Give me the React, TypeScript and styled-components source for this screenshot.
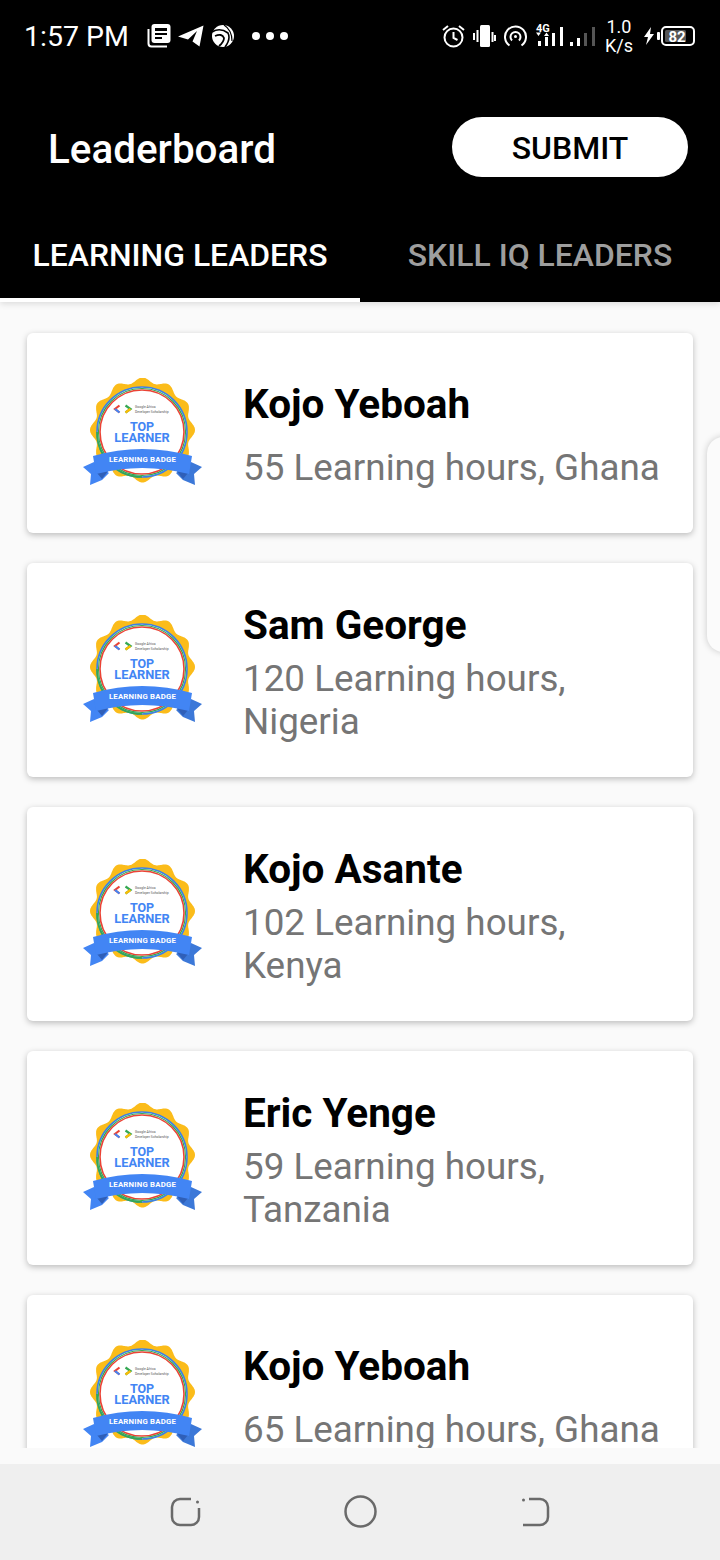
import React, { useState } from "react";
import styled, { createGlobalStyle } from "styled-components";

const GlobalStyle = createGlobalStyle`
  html, body {
    margin: 0;
    padding: 0;
    background: #fafafa;
  }
  * {
    box-sizing: border-box;
  }
`;

const Screen = styled.div`
  position: relative;
  width: 720px;
  height: 1560px;
  display: flex;
  flex-direction: column;
  overflow: hidden;
  background: #fafafa;
  font-family: Roboto, "Liberation Sans", sans-serif;
`;

const Header = styled.header`
  position: relative;
  z-index: 1;
  background: #000;
  color: #fff;
  flex: none;
  box-shadow: 0 2px 6px rgba(0, 0, 0, 0.12);
`;

const StatusBar = styled.div`
  height: 72px;
  display: flex;
  justify-content: space-between;
  align-items: center;
  padding: 0 25px 0 24px;
`;

const StatusGroup = styled.div`
  display: flex;
  align-items: center;
`;

const Clock = styled.span`
  font-size: 28.5px;
  width: 123px;
`;

const Speed = styled.div`
  width: 36px;
  margin-right: 5px;
  font-size: 18px;
  line-height: 19px;
  text-align: center;
`;

const Toolbar = styled.div`
  height: 150px;
  padding: 4px 32px 0 48px;
  display: flex;
  justify-content: space-between;
  align-items: center;
`;

const Title = styled.h1`
  margin: 0;
  font-size: 40.4px;
  font-weight: 500;
`;

const SubmitButton = styled.button`
  width: 236px;
  height: 60px;
  margin-top: -4px;
  padding-top: 2px;
  border: none;
  border-radius: 30px;
  background: #fff;
  color: #000;
  font-family: inherit;
  font-size: 32px;
  font-weight: 500;
`;

const Tabs = styled.div`
  display: flex;
  height: 80px;
`;

const Tab = styled.button<{ $active: boolean }>`
  flex: 1;
  padding: 0 0 10px;
  border: none;
  border-bottom: 4px solid ${(p) => (p.$active ? "#fff" : "transparent")};
  background: transparent;
  color: ${(p) => (p.$active ? "#fff" : "#9e9e9e")};
  font-family: inherit;
  font-size: 31.9px;
  font-weight: 500;
`;

const List = styled.main`
  flex: 1;
  min-height: 0;
  overflow: hidden;
  margin-bottom: 16px;
  padding: 31px 27px 0;
  display: flex;
  flex-direction: column;
  gap: 30px;
`;

const Card = styled.article`
  flex: none;
  display: flex;
  align-items: center;
  background: #fff;
  border-radius: 6px;
  box-shadow: 0 2px 6px rgba(0, 0, 0, 0.25);
`;

const BadgeSlot = styled.div`
  flex: none;
  width: 217px;
  padding: 0 0 0 55px;
  margin-right: -1px;
  display: flex;
`;

const Info = styled.div<{ $oneLine: boolean }>`
  flex: 1;
  padding: ${(p) => (p.$oneLine ? "49px 28px 44px 0" : "40px 28px 34px 0")};
  display: flex;
  flex-direction: column;
  gap: ${(p) => (p.$oneLine ? "19px" : "9px")};
`;

const Name = styled.h2`
  margin: 0;
  font-size: 40.5px;
  line-height: 45px;
  font-weight: 700;
  color: #000;
`;

const Detail = styled.p`
  margin: 0;
  font-size: 36.8px;
  line-height: 43px;
  color: #757575;
`;

const EdgeHandle = styled.div`
  position: absolute;
  top: 437px;
  right: -20px;
  width: 33px;
  height: 215px;
  border-radius: 22px;
  background: #fbfbfb;
  box-shadow: 0 0 7px rgba(0, 0, 0, 0.2);
`;

const NavBar = styled.nav`
  flex: none;
  height: 96px;
  background: #efefef;
  display: flex;
  justify-content: center;
  align-items: center;
  gap: 143px;
  padding-bottom: 1px;
`;

const scallop = (() => {
  const pts: string[] = [];
  for (let i = 0; i < 360; i += 1) {
    const a = (i * Math.PI) / 180;
    const r = 50 + 2.5 * Math.cos(12 * a);
    pts.push(`${(60.5 + r * Math.sin(a)).toFixed(1)},${(52 - r * Math.cos(a)).toFixed(1)}`);
  }
  return pts.join(" ");
})();

const Badge = () => (
  <svg width="122" height="110" viewBox="0 0 122 110" fontFamily="Roboto, sans-serif">
    <polygon points={scallop} fill="#fbbc1a" />
    <circle cx="60" cy="54" r="45" fill="#fff" stroke="#3b82e6" strokeWidth="1.600" />
    <path d="M15 54A45 45 0 0 0 60 99" fill="none" stroke="#34a853" strokeWidth="1.600" />
    <circle cx="60" cy="54" r="43.500" fill="none" stroke="#34a853" strokeWidth="1.200" />
    <circle cx="60" cy="54" r="42" fill="#fff" stroke="#ea4335" strokeWidth="1.600" />
    <path d="M37.500 27.500l-4.500 3.500 4.500 3.500" fill="none" stroke="#ea4335" strokeWidth="2.200" />
    <path d="M33 31l4.500 3.500" fill="none" stroke="#4285f4" strokeWidth="2.200" />
    <path d="M43.500 27.500l5 3.500-5 3.500" fill="none" stroke="#34a853" strokeWidth="2.200" />
    <path d="M48.500 31l-5 3.500" fill="none" stroke="#fbbc05" strokeWidth="2.200" />
    <text x="53" y="30" fontSize="3.400" fill="#555">Google Africa</text>
    <text x="53" y="34.500" fontSize="3.400" fill="#555">Developer Scholarship</text>
    <text x="60" y="52.500" fontSize="12.500" fontWeight="700" fill="#4285f4" textAnchor="middle">TOP</text>
    <text x="60" y="63.500" fontSize="12.800" fontWeight="700" fill="#4285f4" textAnchor="middle">LEARNER</text>
    <path d="M1 89L12 84L27 95L20 102L8 107L9 96Z" fill="#4285f4" />
    <path d="M120 89L109 84L94 95L101 102L113 107L112 96Z" fill="#3c78d8" />
    <path d="M15 95L27 92L20 101Z" fill="#2f5fb8" />
    <path d="M106 95L94 92L101 101Z" fill="#2f5fb8" />
    <path d="M11 78Q60 64 110 78L107 96Q60 84 14 96Z" fill="#4285f4" />
    <text x="60.500" y="84" fontSize="7.800" fontWeight="700" fill="#fff" textAnchor="middle" letterSpacing="0.2">LEARNING BADGE</text>
  </svg>
);

const NewsIcon = () => (
  <svg width="24" height="24" viewBox="0 0 24 24" style={{ marginRight: 7 }}>
    <path d="M1.500 5v14.500a3 3 0 0 0 3 3H20" fill="none" stroke="#fff" strokeWidth="2" />
    <rect x="4.500" y="0" width="19" height="19" rx="3" fill="#fff" />
    <path d="M8 4h12v3H8zM8 9h12v2H8zM8 13h7v2H8z" fill="#000" />
  </svg>
);

const TelegramIcon = () => (
  <svg width="26" height="22" viewBox="0 0 26 22" style={{ marginRight: 8 }}>
    <path d="M0 11.500L25.500 0.500L21.500 21.500L14.500 16.500L19 6L10 14.500Z" fill="#fff" />
  </svg>
);

const SwirlIcon = () => (
  <svg width="22" height="24" viewBox="0 0 22 24" style={{ marginRight: 18 }}>
    <circle cx="11" cy="12" r="11" fill="#fff" />
    <path d="M0 8Q8 3 16 9Q19 15 13 23" fill="none" stroke="#000" strokeWidth="1.600" />
    <path d="M3 12Q10 9 12 14Q12 18 7 22" fill="none" stroke="#000" strokeWidth="1.800" />
    <path d="M12 1Q20 6 20 17" fill="none" stroke="#000" strokeWidth="1.200" />
  </svg>
);

const DotsIcon = () => (
  <svg width="36" height="8" viewBox="0 0 36 8">
    <circle cx="4" cy="4" r="4" fill="#fff" />
    <circle cx="18" cy="4" r="4" fill="#fff" />
    <circle cx="32" cy="4" r="4" fill="#fff" />
  </svg>
);

const AlarmIcon = () => (
  <svg width="23" height="24" viewBox="0 0 23 24" style={{ marginRight: 8 }}>
    <circle cx="11.500" cy="13.500" r="9" fill="none" stroke="#fff" strokeWidth="2" />
    <path d="M11.500 8v6l4 2M1 6l5-4M22 6l-5-4" fill="none" stroke="#fff" strokeWidth="2" />
  </svg>
);

const VibrateIcon = () => (
  <svg width="23" height="24" viewBox="0 0 23 24" style={{ marginRight: 8 }}>
    <rect x="7" y="1" width="10" height="22" rx="1.500" fill="#fff" />
    <path d="M0 9h2v7H0zM3.500 6h2v12h-2zM18.500 8h2v10h-2zM21 11h2v6h-2z" fill="#fff" />
  </svg>
);

const HotspotIcon = () => (
  <svg width="23" height="24" viewBox="0 0 23 24" style={{ marginRight: 8 }}>
    <path d="M5.500 21.500A10.500 10.500 0 1 1 17.500 21.500" fill="none" stroke="#fff" strokeWidth="2" />
    <path d="M8 16.500A5 5 0 1 1 15 16.500" fill="none" stroke="#fff" strokeWidth="2" />
    <circle cx="11.500" cy="12.500" r="1.500" fill="#fff" />
  </svg>
);

const SignalIcon = () => (
  <svg width="64" height="26" viewBox="0 0 64 26" fontFamily="Roboto, sans-serif" style={{ marginRight: 2 }}>
    <text x="1" y="8.500" fontSize="11" fontWeight="700" fill="#fff">4G</text>
    <path d="M1 9.500h5l-2.500 3.500zM9 13h5l-2.500-3.500z" fill="#fff" />
    <path d="M3 18h3v5H3zM10 14h3v9h-3zM17 10h3v13h-3zM25 4h3v19h-3z" fill="#fff" />
    <path d="M35 19h3v4h-3zM42 15h3v8h-3z" fill="#fff" />
    <path d="M49 10h3v13h-3zM57 4h3v19h-3z" fill="#555" />
  </svg>
);

const BatteryIcon = () => (
  <svg width="53" height="20" viewBox="0 0 53 20" fontFamily="Roboto, sans-serif">
    <path d="M9 1L2 11h4l-2 8 8-11H8z" fill="#fff" />
    <rect x="15" y="6" width="3" height="8" rx="1" fill="#fff" />
    <rect x="20" y="1" width="32" height="18" rx="4" fill="#000" stroke="#fff" strokeWidth="2" />
    <rect x="23" y="4" width="21" height="12" rx="1.500" fill="#555" />
    <text x="35" y="15.500" fontSize="15" fontWeight="700" fill="#fff" textAnchor="middle">82</text>
  </svg>
);

const RecentIcon = () => (
  <svg width="31" height="30" viewBox="0 0 31 30">
    <path d="M21 2H10a8 8 0 0 0-8 8v10a8 8 0 0 0 8 8h11a8 8 0 0 0 8-8v-9" fill="none" stroke="#6a6a6a" strokeWidth="2.500" />
    <circle cx="27.500" cy="5" r="1.500" fill="#6a6a6a" />
  </svg>
);

const HomeIcon = () => (
  <svg width="33" height="33" viewBox="0 0 33 33">
    <circle cx="16.500" cy="16.500" r="15" fill="none" stroke="#6a6a6a" strokeWidth="2.500" />
  </svg>
);

const BackIcon = () => (
  <svg width="31" height="30" viewBox="0 0 31 30">
    <path d="M9 2h11a8 8 0 0 1 8 8v10a8 8 0 0 1-8 8H3" fill="none" stroke="#6a6a6a" strokeWidth="2.500" />
    <circle cx="3.500" cy="3" r="1.500" fill="#6a6a6a" />
  </svg>
);

const leaders = [
  { name: "Kojo Yeboah", hours: 55, country: "Ghana" },
  { name: "Sam George", hours: 120, country: "Nigeria" },
  { name: "Kojo Asante", hours: 102, country: "Kenya" },
  { name: "Eric Yenge", hours: 59, country: "Tanzania" },
  { name: "Kojo Yeboah", hours: 65, country: "Ghana" },
];

const App: React.FC = () => {
  const [tab, setTab] = useState<number>(0);
  return (
    <Screen>
      <GlobalStyle />
      <Header>
        <StatusBar>
          <StatusGroup>
            <Clock>1:57 PM</Clock>
            <NewsIcon />
            <TelegramIcon />
            <SwirlIcon />
            <DotsIcon />
          </StatusGroup>
          <StatusGroup>
            <AlarmIcon />
            <VibrateIcon />
            <HotspotIcon />
            <SignalIcon />
            <Speed>
              1.0
              <br />
              K/s
            </Speed>
            <BatteryIcon />
          </StatusGroup>
        </StatusBar>
        <Toolbar>
          <Title>Leaderboard</Title>
          <SubmitButton>SUBMIT</SubmitButton>
        </Toolbar>
        <Tabs>
          <Tab $active={tab === 0} onClick={() => setTab(0)}>
            LEARNING LEADERS
          </Tab>
          <Tab $active={tab === 1} onClick={() => setTab(1)}>
            SKILL IQ LEADERS
          </Tab>
        </Tabs>
      </Header>
      <List>
        {leaders.map((l, i) => (
          <Card key={i}>
            <BadgeSlot>
              <Badge />
            </BadgeSlot>
            <Info $oneLine={l.country === "Ghana"}>
              <Name>{l.name}</Name>
              <Detail>
                {l.hours} Learning hours, {l.country}
              </Detail>
            </Info>
          </Card>
        ))}
      </List>
      <EdgeHandle />
      <NavBar>
        <RecentIcon />
        <HomeIcon />
        <BackIcon />
      </NavBar>
    </Screen>
  );
};

export default App;
